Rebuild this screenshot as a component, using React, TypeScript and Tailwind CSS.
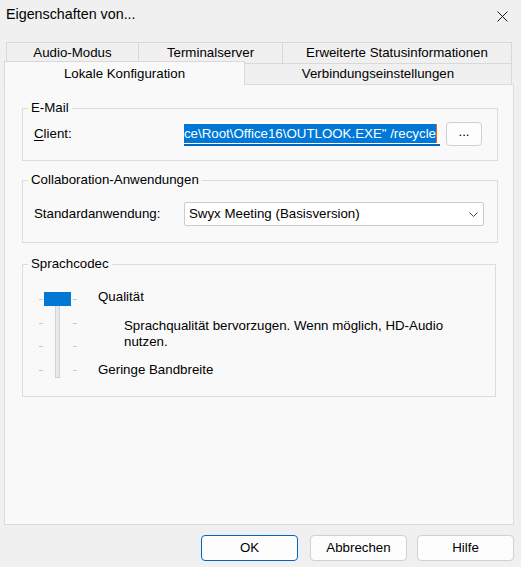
import React from "react";

const tabTop = "flex items-center justify-center border-t border-l border-[#d9d9d9] bg-[#f0f0f0]";

function GroupBox({
  title,
  className,
  children,
}: {
  title: string;
  className: string;
  children: React.ReactNode;
}) {
  return (
    <div className={`relative border border-[#dcdcdc] ${className}`}>
      <span className="absolute -top-[9px] left-[5px] bg-[#f9f9f9] px-[3px] leading-[16px]">
        {title}
      </span>
      {children}
    </div>
  );
}

function VerticalSlider() {
  const ticks = [9, 33, 56, 80];
  return (
    <svg width="40" height="90" viewBox="0 0 40 90" className="mt-[1px] shrink-0">
      {ticks.map((y) => (
        <g key={y} fill="#c8c8c8">
          <rect x="1" y={y} width="4" height="1" />
          <rect x="35" y={y} width="4" height="1" />
        </g>
      ))}
      <rect x="17" y="16" width="5" height="72" fill="#d2d2d2" />
      <rect x="18" y="16" width="3" height="71" fill="#e8e8e8" />
      <rect x="6" y="2" width="27" height="14" fill="#0078d4" />
    </svg>
  );
}

function DialogButton({ label, primary, className }: { label: string; primary?: boolean; className?: string }) {
  return (
    <button
      type="button"
      className={`flex h-[26px] w-[97px] items-center justify-center rounded-[4px] border bg-[#fdfdfd] ${
        primary ? "border-[#0067c0]" : "border-[#d0d0d0]"
      } ${className ?? ""}`}
    >
      {label}
    </button>
  );
}

export default function App() {
  return (
    <div className="flex h-[567px] w-[521px] flex-col overflow-hidden bg-[#f0f0f0] font-['Liberation_Sans',Arial,sans-serif] text-[13.3px] text-black">
      {/* title bar */}
      <div className="flex h-[29px] items-center justify-between pl-[6px] pr-[13px]">
        <span className="text-[14.3px]">Eigenschaften von...</span>
        <svg width="11" height="11" viewBox="0 0 11 11" className="mt-[4px]">
          <path d="M0.5 0.5 L10.5 10.5 M10.5 0.5 L0.5 10.5" stroke="#1a1a1a" strokeWidth="1" />
        </svg>
      </div>

      {/* tabs, back row */}
      <div className="mt-[13px] flex h-[21px] pl-[6px]">
        <div className={`${tabTop} w-[132px]`}>Audio-Modus</div>
        <div className={`${tabTop} w-[144px]`}>Terminalserver</div>
        <div className={`${tabTop} w-[230px] border-r`}>Erweiterte Statusinformationen</div>
      </div>

      {/* tabs, front row */}
      <div className="relative z-10 flex h-[21px] pl-[4px]">
        <div className="-mt-[2px] flex h-[24px] w-[241px] justify-center border-x border-t border-[#d9d9d9] bg-[#f9f9f9] pt-[2px]">
          Lokale Konfiguration
        </div>
        <div className="flex h-[21px] w-[267px] items-center justify-center border-r border-t border-[#d9d9d9] bg-[#f0f0f0]">
          Verbindungseinstellungen
        </div>
      </div>

      {/* tab page */}
      <div className="ml-[4px] h-[441px] w-[510px] border border-[#dcdcdc] bg-[#f9f9f9] pl-[17px]">
        <GroupBox title="E-Mail" className="mt-[23px] w-[476px]">
          <div className="flex items-center pb-[14px] pl-[11px] pt-[13px]">
            <span className="w-[150px]">
              <u className="underline-offset-2">C</u>lient:
            </span>
            <div className="flex h-[24px] w-[256px] justify-end overflow-hidden border-b-2 border-[#0067c0] bg-white pl-[2px] pr-[3px] pt-[2px]">
              <span className="h-[19px] shrink-0 whitespace-nowrap bg-[#0078d7] leading-[19px] text-white">
                "C:\Program Files\Microsoft Office\Root\Office16\OUTLOOK.EXE" /recycle
              </span>
              <span className="h-[19px] w-[1px] shrink-0 bg-[#f7630c]" />
            </div>
            <button
              type="button"
              className="ml-[6px] flex h-[24px] w-[36px] items-center justify-center rounded-[4px] border border-[#d0d0d0] bg-[#fdfdfd] pb-[4px]"
            >
              ...
            </button>
          </div>
        </GroupBox>

        <GroupBox title="Collaboration-Anwendungen" className="mt-[19px] w-[476px]">
          <div className="flex items-center pb-[16px] pl-[11px] pt-[21px]">
            <span className="w-[150px]">Standardanwendung:</span>
            <div className="flex h-[24px] w-[300px] items-center justify-between rounded-[2px] border border-[#cccccc] bg-white pl-[4px] pr-[5px]">
              <span>Swyx Meeting (Basisversion)</span>
              <svg width="9" height="5" viewBox="0 0 9 5">
                <path d="M0.5 0.5 L4.5 4.5 L8.5 0.5" fill="none" stroke="#444" strokeWidth="1" />
              </svg>
            </div>
          </div>
        </GroupBox>

        <GroupBox title="Sprachcodec" className="mt-[21px] h-[133px] w-[474px]">
          <div className="flex items-start pl-[15px] pt-[24px]">
            <VerticalSlider />
            <div className="ml-[20px] flex flex-col leading-[16px]">
              <span>Qualität</span>
              <p className="mt-[13px] w-[350px] pl-[26px]">
                Sprachqualität bervorzugen. Wenn möglich, <span className="whitespace-nowrap">HD-Audio</span> nutzen.
              </p>
              <span className="mt-[12px]">Geringe Bandbreite</span>
            </div>
          </div>
        </GroupBox>
      </div>

      {/* dialog buttons */}
      <div className="mt-[10px] flex justify-end pr-[7px]">
        <DialogButton label="OK" primary className="mr-[12px] w-[96px]" />
        <DialogButton label="Abbrechen" className="mr-[10px]" />
        <DialogButton label="Hilfe" />
      </div>
    </div>
  );
}
